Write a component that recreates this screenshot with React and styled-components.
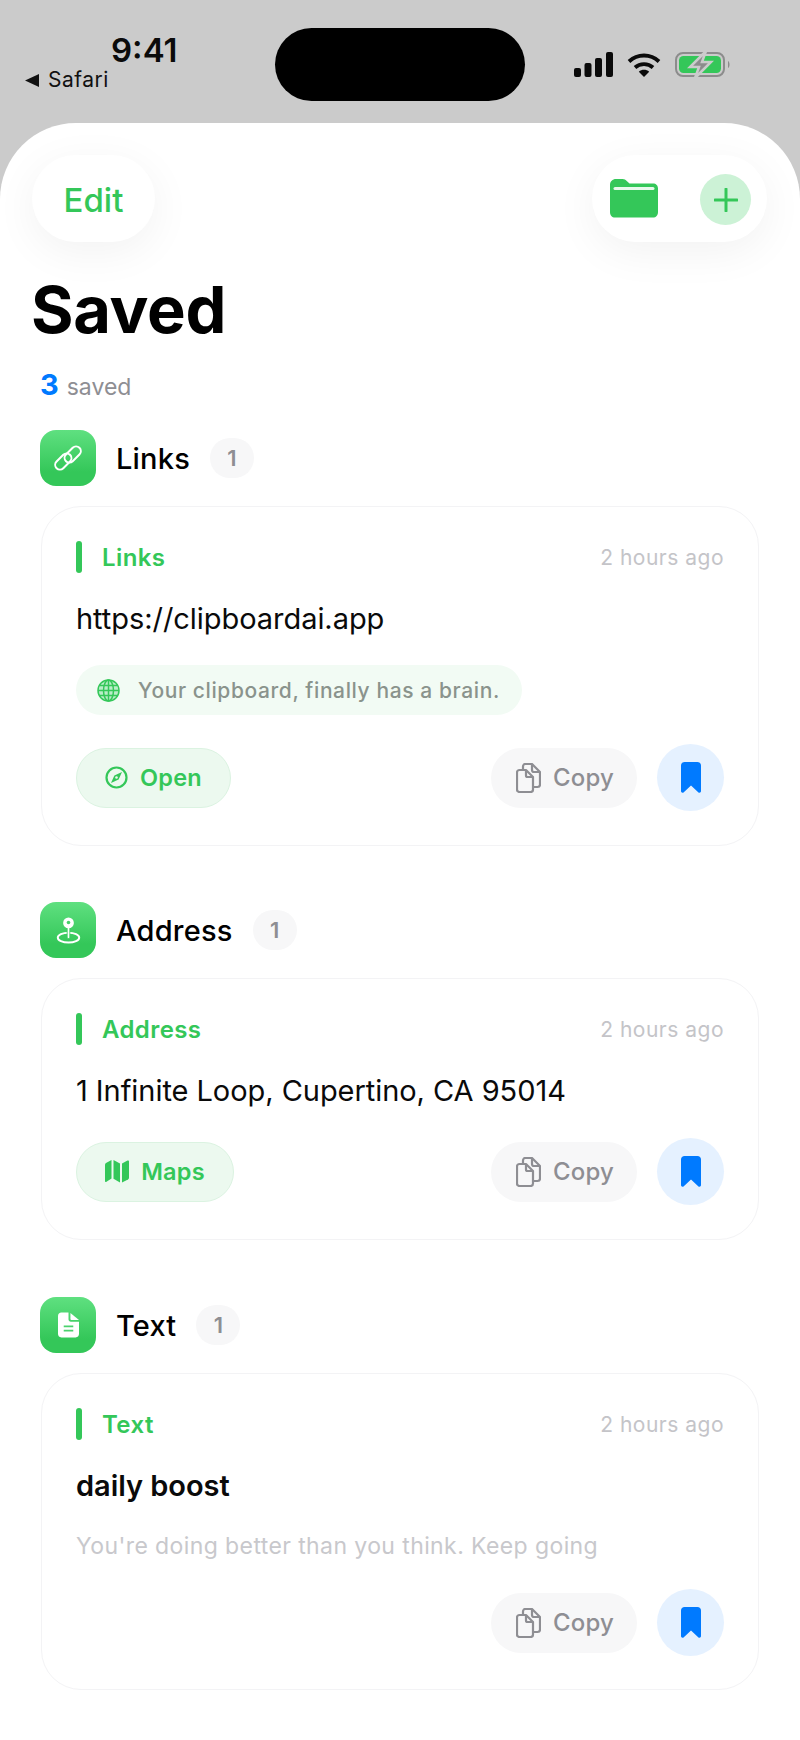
import React from 'react'
import styled, { createGlobalStyle } from 'styled-components'

const green = '#34c759'
const blue = '#007aff'

const Global = createGlobalStyle`
  html, body { margin: 0; padding: 0; background: #cbcbcb; }
  body { font-family: Inter, "Liberation Sans", sans-serif; -webkit-font-smoothing: antialiased; }
`

const Screen = styled.div`
  position: relative;
  width: 800px;
  height: 1740px;
  overflow: hidden;
  background: #cbcbcb;
`
const StatusBar = styled.div`
  height: 123px;
  display: flex;
  box-sizing: border-box;
  padding: 28px 0 0 25px;
`
const TimeCol = styled.div`
  width: 250px;
  flex: none;
  padding-top: 3px;
`
const Time = styled.div`
  font-size: 33px;
  font-weight: 600;
  line-height: 38px;
  color: #0b0b0b;
  padding-left: 86px;
`
const BackLink = styled.div`
  display: flex;
  align-items: center;
  gap: 9px;
  font-size: 21px;
  line-height: 22px;
  letter-spacing: 0.5px;
  color: #111;
`
const Island = styled.div`
  width: 250px;
  height: 73px;
  background: #000;
  border-radius: 37px;
  flex: none;
`
const StatusIcons = styled.div`
  display: flex;
  align-items: center;
  height: 73px;
  margin-left: 49px;
  gap: 14px;
`
const Sheet = styled.div`
  height: 1617px;
  background: #fff;
  border-radius: 76px 76px 0 0;
  box-sizing: border-box;
  padding-top: 32px;
`
const TopRow = styled.div`
  display: flex;
  justify-content: space-between;
  padding: 0 33px 0 32px;
`
const FloatPill = styled.div`
  height: 87px;
  border-radius: 44px;
  background: #fff;
  box-shadow: 0 10px 44px rgba(0, 0, 0, 0.055);
  display: flex;
  align-items: center;
  box-sizing: border-box;
`
const EditPill = styled(FloatPill)`
  width: 123px;
  justify-content: center;
  padding-top: 2px;
  color: ${green};
  font-size: 33px;
  font-weight: 500;
`
const ToolPill = styled(FloatPill)`
  width: 175px;
  padding: 0 16px 0 18px;
  justify-content: space-between;
`
const PlusCircle = styled.div`
  width: 51px;
  height: 51px;
  margin-top: 2px;
  border-radius: 50%;
  background: #ccf2d6;
  display: flex;
  align-items: center;
  justify-content: center;
`
const Title = styled.h1`
  margin: 30px 0 0 31px;
  font-size: 65px;
  line-height: 75px;
  font-weight: 700;
  letter-spacing: -0.3px;
  color: #000;
`
const Summary = styled.div`
  margin: 22px 0 0 40px;
  display: flex;
  align-items: baseline;
  gap: 8px;
  font-size: 23px;
  line-height: 32px;
  color: #8e8e93;
`
const Count = styled.span`
  color: ${blue};
  font-size: 29px;
  font-weight: 700;
`
const Section = styled.section`
  margin: ${p => p.$top}px 41px 0 40px;
`
const SectionHead = styled.div`
  display: flex;
  align-items: center;
  height: 56px;
`
const SectionIcon = styled.div`
  width: 56px;
  height: 56px;
  border-radius: 16px;
  background: linear-gradient(180deg, #5fe080 0%, #34c759 75%);
  display: flex;
  align-items: center;
  justify-content: center;
`
const SectionName = styled.div`
  margin-left: 20px;
  font-size: 29px;
  font-weight: 550;
  letter-spacing: 0.2px;
  color: #000;
`
const Badge = styled.div`
  margin-left: 20px;
  width: 44px;
  height: 40px;
  border-radius: 20px;
  background: #f7f7f8;
  color: #8e8e93;
  font-size: 22px;
  font-weight: 600;
  display: flex;
  align-items: center;
  justify-content: center;
`
const Card = styled.div`
  margin: 20px 0 0 1px;
  border: 1px solid #f3f3f5;
  border-radius: 40px;
  box-sizing: border-box;
  height: ${p => p.$height}px;
  padding: 34px 34px 0 34px;
`
const CardHead = styled.div`
  display: flex;
  align-items: center;
  height: 32px;
`
const Bar = styled.div`
  width: 6px;
  height: 32px;
  border-radius: 3px;
  background: ${green};
`
const Label = styled.div`
  margin-left: 20px;
  font-size: 24px;
  font-weight: 600;
  letter-spacing: 0.4px;
  color: ${green};
`
const When = styled.div`
  margin-left: auto;
  font-size: 21px;
  letter-spacing: 0.5px;
  color: #c4c4c8;
`
const Content = styled.div`
  margin-top: 28px;
  font-size: 29px;
  line-height: 36px;
  letter-spacing: -0.05px;
  font-weight: ${p => (p.$bold ? 600 : 400)};
  color: #0a0a0a;
`
const Note = styled.div`
  margin-top: 27px;
  font-size: 23px;
  line-height: 30px;
  letter-spacing: 0.4px;
  color: #c8c8cc;
`
const Chip = styled.div`
  margin-top: 28px;
  width: 446px;
  height: 50px;
  border-radius: 25px;
  background: #f2fbf4;
  display: flex;
  align-items: center;
  padding-left: 21px;
  box-sizing: border-box;
  gap: 18px;
  font-size: 21px;
  font-weight: 500;
  letter-spacing: 0.6px;
  color: #8a938c;
`
const Actions = styled.div`
  margin-top: ${p => p.$top}px;
  display: flex;
  align-items: center;
  height: 67px;
`
const OpenButton = styled.div`
  width: ${p => p.$width}px;
  height: 60px;
  border-radius: 30px;
  background: #ecf9ef;
  border: 1px solid #dbf3e1;
  box-sizing: border-box;
  display: flex;
  align-items: center;
  justify-content: center;
  gap: 12px;
  font-size: 23.5px;
  font-weight: 600;
  letter-spacing: 0.2px;
  color: ${green};
`
const CopyButton = styled.div`
  margin-left: auto;
  width: 146px;
  height: 60px;
  border-radius: 30px;
  background: #f7f7f8;
  display: flex;
  align-items: center;
  justify-content: center;
  box-sizing: border-box;
  padding-left: 2px;
  gap: 12px;
  font-size: 24px;
  font-weight: 500;
  letter-spacing: 0.2px;
  color: #8e8e93;
`
const SaveButton = styled.div`
  margin-left: 20px;
  width: 67px;
  height: 67px;
  border-radius: 50%;
  background: #e5f1ff;
  display: flex;
  align-items: center;
  justify-content: center;
`

const Signal = () => (
  <svg width="39" height="25" viewBox="0 0 39 25" fill="#0a0a0a">
    <rect x="0" y="16" width="7" height="9" rx="2" />
    <rect x="10.500" y="11" width="7" height="14" rx="2" />
    <rect x="21" y="6" width="7" height="19" rx="2" />
    <rect x="32" y="0" width="7" height="25" rx="2" />
  </svg>
)

const Wifi = () => (
  <svg width="34" height="25" viewBox="0 0 34 25" fill="none" stroke="#0a0a0a" strokeWidth="3.800">
    <path d="M2 9.500C10.500 1.500 23.500 1.500 32 9.500" />
    <path d="M8 15.500C13 11 21 11 26 15.500" />
    <path d="M17 25L11.800 19.800C14.800 17.200 19.200 17.200 22.200 19.800Z" fill="#0a0a0a" stroke="none" />
  </svg>
)

const Battery = () => (
  <svg width="56" height="28" viewBox="0 0 56 28">
    <rect x="1" y="2" width="48" height="23" rx="7" fill="none" stroke="#8c8c8c" strokeWidth="2" />
    <rect x="4" y="5" width="42" height="17" rx="4.500" fill={green} />
    <path d="M53 10C55 11 55 16 53 17Z" fill="#8c8c8c" />
    <path d="M31 0L15 16H24L20 27L36 11H27Z" fill="#8c8c8c" stroke="#cbcbcb" strokeWidth="2.500" />
  </svg>
)

const Folder = () => (
  <svg width="48" height="39" viewBox="0 0 48 39">
    <path d="M0 6C0 2.500 2.500 0 6 0H12.500C14.500 0 15.500 .8 17 2.200L19.500 4.500H43C46 4.500 48 6.500 48 9.500V33C48 36.500 46 38.500 43 38.500H5C2 38.500 0 36.500 0 33Z" fill={green} />
    <rect x="3.500" y="8" width="41" height="3" rx="1.500" fill="#e8f9ec" />
  </svg>
)

const Plus = () => (
  <svg width="24" height="24" viewBox="0 0 24 24" stroke={green} strokeWidth="3" strokeLinecap="round">
    <path d="M12 1V23M1 12H23" />
  </svg>
)

const LinkIcon = () => (
  <svg width="28" height="28" viewBox="0 0 28 28" fill="none" stroke="#fff" strokeWidth="2">
    <rect x="9.200" y="5.750" width="19" height="9.500" rx="4.750" transform="rotate(-45 18.700 10.500)" />
    <rect x="-0.200" y="12.750" width="19" height="9.500" rx="4.750" transform="rotate(-45 9.300 17.500)" />
  </svg>
)

const PinIcon = () => (
  <svg width="25" height="27" viewBox="0 0 28 30" fill="none">
    <ellipse cx="14" cy="23" rx="12" ry="5.500" stroke="#fff" strokeWidth="2.200" />
    <rect x="12.500" y="8" width="3" height="16" rx="1.500" fill="#fff" stroke="#3ccc61" strokeWidth="1" />
    <circle cx="14" cy="6.500" r="6" fill="#fff" />
    <circle cx="14" cy="6" r="2" fill="#46d069" />
  </svg>
)

const DocIcon = () => (
  <svg width="21" height="26" viewBox="0 0 22 26">
    <path d="M3.500 0H11V7C11 8.500 12 9.500 13.500 9.500H22V22.500C22 24.500 20.500 26 18.500 26H3.500C1.500 26 0 24.500 0 22.500V3.500C0 1.500 1.500 0 3.500 0Z" fill="#fff" />
    <path d="M13 .5L22 7.800H14C13.400 7.800 13 7.400 13 6.800Z" fill="#fff" />
    <path d="M6 14.500H16M6 19H16" stroke="#4bd26e" strokeWidth="1.800" />
  </svg>
)

const Globe = () => (
  <svg width="23" height="23" viewBox="0 0 23 23" fill="none" stroke={green} strokeWidth="1.500">
    <circle cx="11.500" cy="11.500" r="10.500" fill="#b9edc8" />
    <ellipse cx="11.500" cy="11.500" rx="5" ry="10.500" />
    <path d="M11.500 1V22M1 11.500H22M2.500 6.500H20.500M2.500 16.500H20.500" />
  </svg>
)

const Compass = () => (
  <svg width="23" height="23" viewBox="0 0 23 23" fill="none">
    <circle cx="11.500" cy="11.500" r="10" stroke={green} strokeWidth="2.200" />
    <path d="M17 6L13.600 13.600L6 17L9.400 9.400Z" fill={green} />
    <circle cx="11.500" cy="11.500" r="1.300" fill="#ecf9ef" />
  </svg>
)

const MapIcon = () => (
  <svg width="24" height="23" viewBox="0 0 24 23" fill={green}>
    <path d="M0 4.500C0 3.800 .4 3.400 1 3L6.500 0V18.500L1.500 21.800C.7 22.300 0 21.800 0 21Z" />
    <path d="M8.500 0L15 3.500V22.500L8.500 18.800Z" />
    <path d="M17 3.500L22.500 .6C23.300 .2 24 .7 24 1.500V17.800C24 18.500 23.700 19 23 19.400L17 22.500Z" />
  </svg>
)

const CopyIcon = () => (
  <svg width="25" height="30" viewBox="0 0 25 30" fill="none" stroke="#8e8e93" strokeWidth="2.200" strokeLinejoin="round">
    <path d="M7 6V3.500C7 2 8 1 9.500 1H16L24 9V21.500C24 23 23 24 21.500 24H17" />
    <path d="M16 1V7C16 8 17 9 18 9H24" />
    <path d="M3.500 7H10L17 14V26.500C17 28 16 29 14.500 29H3.500C2 29 1 28 1 26.500V9.500C1 8 2 7 3.500 7Z" />
    <path d="M10 7V12.500C10 13.500 10.700 14 11.500 14H17" />
  </svg>
)

const BookmarkIcon = () => (
  <svg width="20" height="31" viewBox="0 0 20 31">
    <path d="M3.500 0H16.500C18.500 0 20 1.500 20 3.500V29C20 30.600 18.400 31.300 17.200 30.200L10 23.500L2.800 30.200C1.600 31.300 0 30.600 0 29V3.500C0 1.500 1.500 0 3.500 0Z" fill={blue} />
  </svg>
)

const Actionbar = ({ top, main }) => (
  <Actions $top={top}>
    {main}
    <CopyButton><CopyIcon />Copy</CopyButton>
    <SaveButton><BookmarkIcon /></SaveButton>
  </Actions>
)

const App = () => (
  <Screen>
    <Global />
    <StatusBar>
      <TimeCol>
        <Time>9:41</Time>
        <BackLink>
          <svg width="14" height="13" viewBox="0 0 14 13" fill="#111"><path d="M14 0V13L0 6.500Z" /></svg>
          Safari
        </BackLink>
      </TimeCol>
      <Island />
      <StatusIcons>
        <Signal />
        <Wifi />
        <Battery />
      </StatusIcons>
    </StatusBar>
    <Sheet>
      <TopRow>
        <EditPill>Edit</EditPill>
        <ToolPill>
          <Folder />
          <PlusCircle><Plus /></PlusCircle>
        </ToolPill>
      </TopRow>
      <Title>Saved</Title>
      <Summary><Count>3</Count>saved</Summary>

      <Section $top={27}>
        <SectionHead>
          <SectionIcon><LinkIcon /></SectionIcon>
          <SectionName>Links</SectionName>
          <Badge>1</Badge>
        </SectionHead>
        <Card $height={340}>
          <CardHead>
            <Bar />
            <Label>Links</Label>
            <When>2 hours ago</When>
          </CardHead>
          <Content>https://clipboardai.app</Content>
          <Chip><Globe />Your clipboard, finally has a brain.</Chip>
          <Actionbar top={29} main={<OpenButton $width={155}><Compass />Open</OpenButton>} />
        </Card>
      </Section>

      <Section $top={56}>
        <SectionHead>
          <SectionIcon><PinIcon /></SectionIcon>
          <SectionName>Address</SectionName>
          <Badge>1</Badge>
        </SectionHead>
        <Card $height={262}>
          <CardHead>
            <Bar />
            <Label>Address</Label>
            <When>2 hours ago</When>
          </CardHead>
          <Content>1 Infinite Loop, Cupertino, CA 95014</Content>
          <Actionbar top={29} main={<OpenButton $width={158}><MapIcon />Maps</OpenButton>} />
        </Card>
      </Section>

      <Section $top={57}>
        <SectionHead>
          <SectionIcon><DocIcon /></SectionIcon>
          <SectionName>Text</SectionName>
          <Badge>1</Badge>
        </SectionHead>
        <Card $height={317}>
          <CardHead>
            <Bar />
            <Label>Text</Label>
            <When>2 hours ago</When>
          </CardHead>
          <Content $bold>daily boost</Content>
          <Note>You're doing better than you think. Keep going</Note>
          <Actionbar top={28} />
        </Card>
      </Section>
    </Sheet>
  </Screen>
)

export default App
